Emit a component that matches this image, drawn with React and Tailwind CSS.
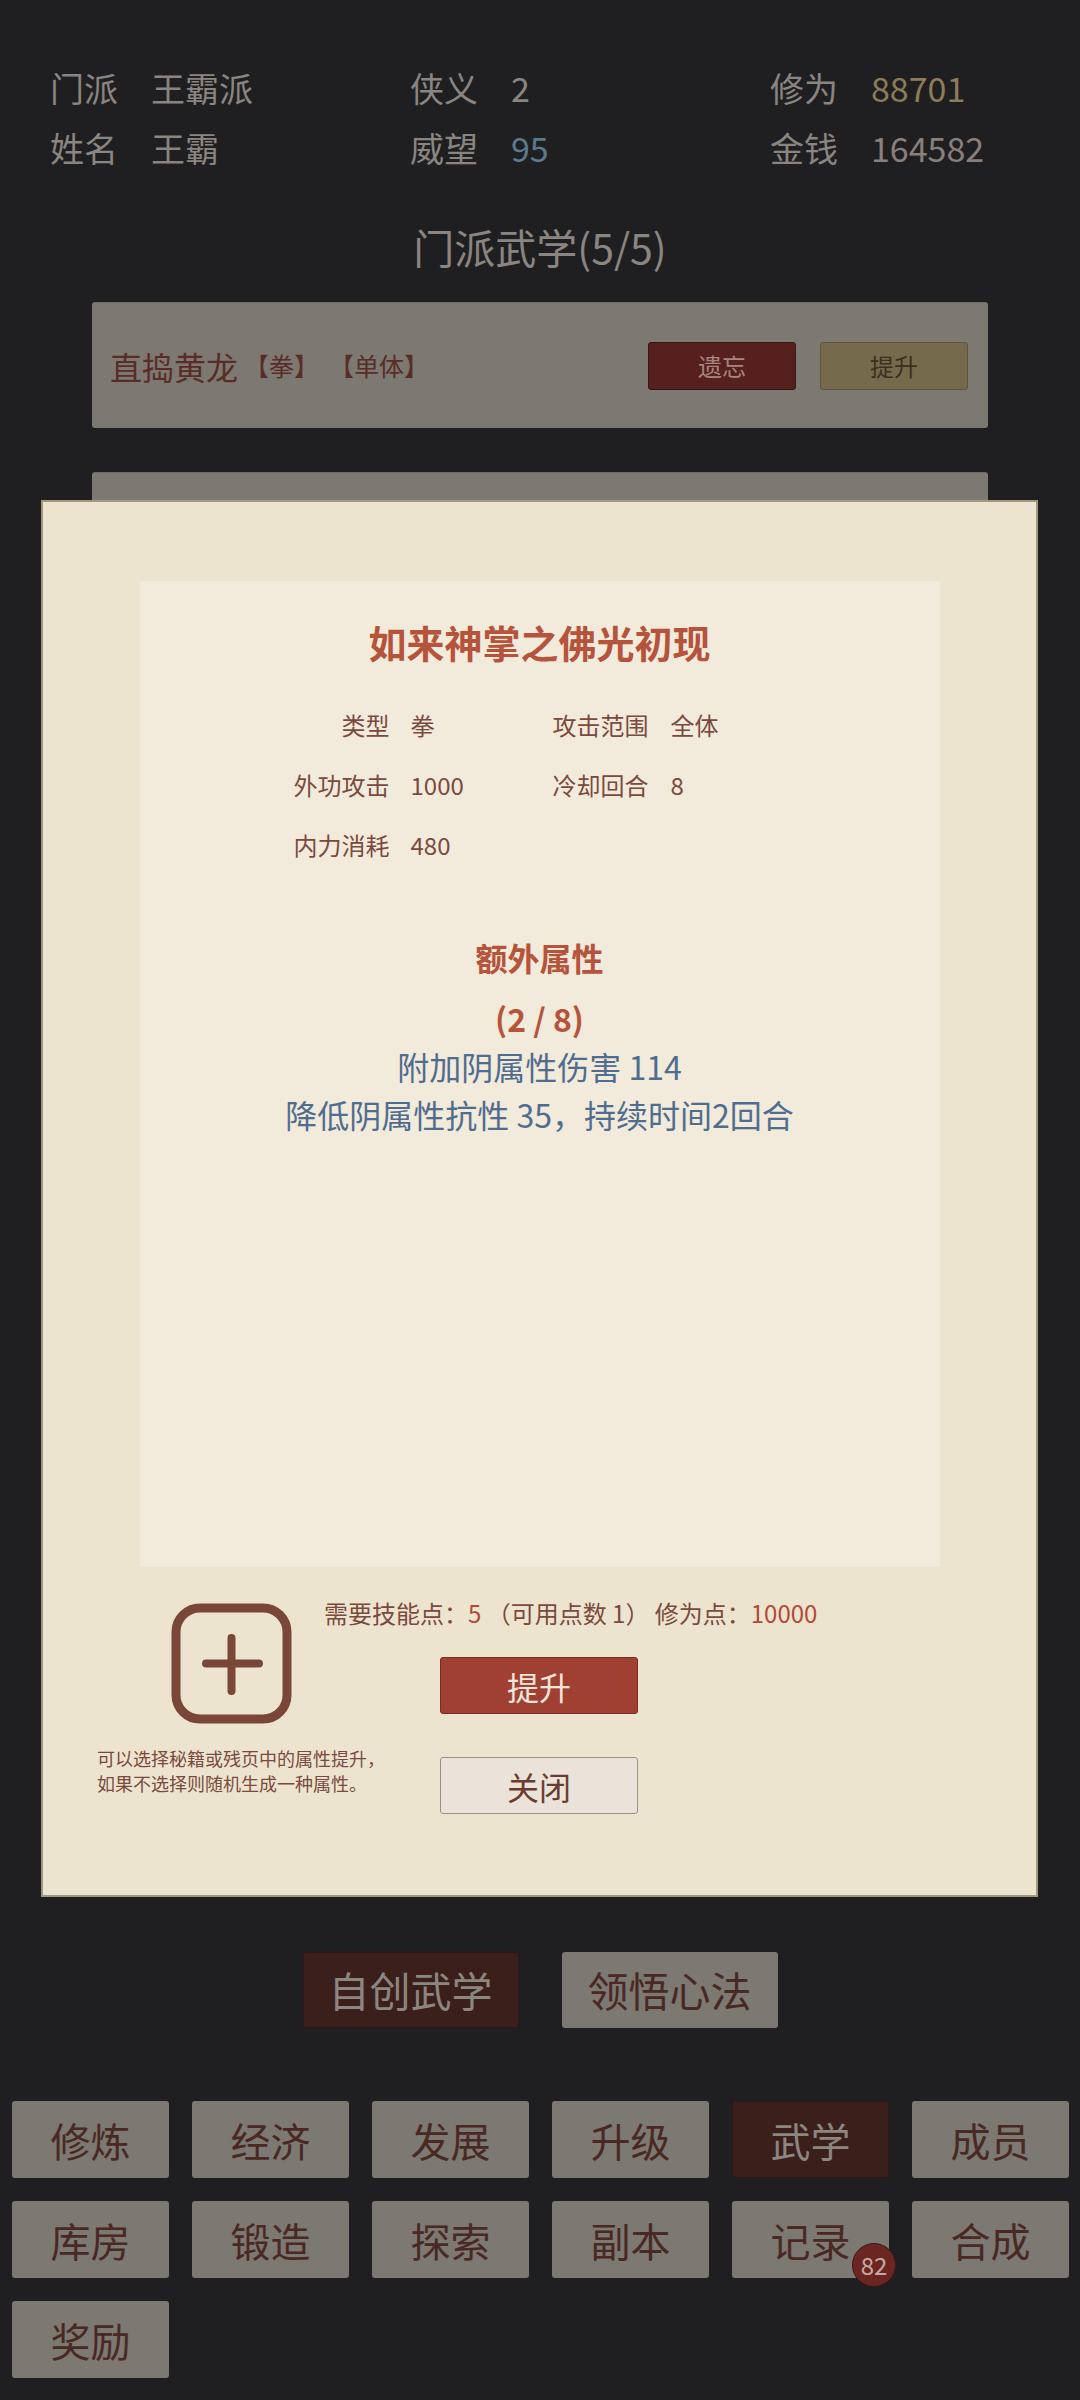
import React from 'react'

const font = { fontFamily: '"Noto Sans CJK SC", "Noto Sans", sans-serif' }

function InfoItem({ label, value, color }) {
  return (
    <div className="flex items-center h-[60px]">
      <span className="w-[68px] text-[#8a8580]">{label}</span>
      <span className={`ml-[33px] ${color}`}>{value}</span>
    </div>
  )
}

function StatRow({ a, b, c, d }) {
  return (
    <div className="flex items-center h-[60px] text-[24px] text-[#7a4a3e]">
      <span className="w-[250px] text-right">{a}</span>
      <span className="w-[142px] ml-[21px]">{b}</span>
      <span className="w-[96px] text-right">{c}</span>
      <span className="ml-[22px]">{d}</span>
    </div>
  )
}

function PlusIcon() {
  return (
    <svg width="121" height="121" viewBox="0 0 121 121" fill="none">
      <rect x="5" y="5" width="111" height="111" rx="24" stroke="#7a4638" strokeWidth="9" />
      <path d="M35 60.5H88M60.5 35V88" stroke="#7a4638" strokeWidth="8" strokeLinecap="round" />
    </svg>
  )
}

function Modal() {
  return (
    <div className="absolute left-[41px] top-[500px] w-[997px] h-[1397px] bg-[#ede4cf] border-2 border-[#a0977f] pt-[79px]">
      <div className="mx-auto w-[800px] h-[986px] bg-[#f2eadb] flex flex-col">
        <div className="mt-[36px] h-[50px] leading-[50px] text-center text-[38px] font-bold text-[#b5533b]">如来神掌之佛光初现</div>
        <div className="mt-[28px]">
          <StatRow a="类型" b="拳" c="攻击范围" d="全体" />
          <StatRow a="外功攻击" b="1000" c="冷却回合" d="8" />
          <StatRow a="内力消耗" b="480" c="" d="" />
        </div>
        <div className="mt-[57px] h-[50px] leading-[50px] text-center text-[32px] font-bold text-[#b5533b]">额外属性</div>
        <div className="mt-[12px] text-center text-[32px] leading-[48px]">
          <div className="font-semibold text-[#b5533b]">(2 / 8)</div>
          <div className="text-[#4f6d8e]">附加阴属性伤害 114</div>
          <div className="text-[#4f6d8e]">降低阴属性抗性 35，持续时间2回合</div>
        </div>
      </div>
      <div className="flex mt-[30px]">
        <div className="w-[227px] ml-[54px] flex flex-col">
          <div className="ml-[74px] mt-[6px]"><PlusIcon /></div>
          <div className="mt-[22px] text-[18px] leading-[25px] text-[#7a4a3e] whitespace-nowrap">
            <div>可以选择秘籍或残页中的属性提升，</div>
            <div>如果不选择则随机生成一种属性。</div>
          </div>
        </div>
        <div className="flex flex-col">
          <div className="text-[24px] leading-[32px] text-[#7a4a3e] whitespace-nowrap">
            需要技能点：<span className="text-[#b04a3a]">5</span> （可用点数 1） 修为点：<span className="text-[#b04a3a]">10000</span>
          </div>
          <button className="ml-[116px] mt-[28px] w-[198px] h-[57px] rounded-[3px] bg-[#a04033] border border-[#7a2c22] text-[32px] text-[#f4e6dc] flex items-center justify-center">提升</button>
          <button className="ml-[116px] mt-[43px] w-[198px] h-[57px] rounded-[3px] bg-[#ebe3da] border border-[#9a9088] text-[32px] text-[#6a3c30] flex items-center justify-center">关闭</button>
        </div>
      </div>
    </div>
  )
}

const nav = ['修炼', '经济', '发展', '升级', '武学', '成员', '库房', '锻造', '探索', '副本', '记录', '合成', '奖励']

export default function App() {
  return (
    <div className="relative w-[1080px] h-[2400px] bg-[#1f1f21] overflow-hidden" style={font}>
      <div className="pt-[57px] pl-[50px] grid grid-cols-[360px_360px_1fr] text-[34px]">
        <InfoItem label="门派" value="王霸派" color="text-[#8a8580]" />
        <InfoItem label="侠义" value="2" color="text-[#8a8580]" />
        <InfoItem label="修为" value="88701" color="text-[#8c7d58]" />
        <InfoItem label="姓名" value="王霸" color="text-[#8a8580]" />
        <InfoItem label="威望" value="95" color="text-[#5a7a8e]" />
        <InfoItem label="金钱" value="164582" color="text-[#8a7f7a]" />
      </div>
      <div className="mt-[41px] h-[56px] leading-[56px] text-center text-[41px] text-[#8a8580]">门派武学(5/5)</div>

      <div className="mt-[28px] h-[1650px] flex flex-col gap-[44px] items-center">
        <div className="w-[896px] h-[126px] shrink-0 bg-[#7c7872] rounded-[3px] border-t border-[#6f6b66] flex items-center pl-[18px] pr-[20px]">
          <span className="text-[32px] text-[#5a2c26]">直捣黄龙</span>
          <span className="ml-[6px] text-[25px] text-[#5a2c26]">【拳】</span>
          <span className="ml-[10px] text-[25px] text-[#5a2c26]">【单体】</span>
          <div className="ml-auto flex gap-[24px]">
            <button className="w-[148px] h-[48px] rounded-[3px] bg-[#55201d] border border-[#3a1512] text-[24px] text-[#a88580]">遗忘</button>
            <button className="w-[148px] h-[48px] rounded-[3px] bg-[#766a4d] border border-[#5e5440] text-[24px] text-[#3a3020]">提升</button>
          </div>
        </div>
        <div className="w-[896px] h-[126px] shrink-0 bg-[#7c7872] rounded-[3px] border-t border-[#6f6b66]" />
      </div>

      <div className="flex justify-center gap-[43px]">
        <button className="w-[216px] h-[76px] rounded-[3px] bg-[#3b1f1b] border border-[#2e1714] text-[41px] text-[#8c8680]">自创武学</button>
        <button className="w-[216px] h-[76px] rounded-[3px] bg-[#7c7872] text-[41px] text-[#4a2824]">领悟心法</button>
      </div>

      <div className="mt-[73px] pl-[12px] grid grid-cols-[repeat(6,157px)] gap-[23px]">
        {nav.map((n) => (
          <div key={n} className={`relative h-[77px] rounded-[3px] flex items-center justify-center text-[40px] ${n === '武学' ? 'bg-[#3b1f1b] border border-[#2e1714] text-[#8c8680]' : 'bg-[#7c7872] text-[#4a2824]'}`}>
            {n}
            {n === '记录' && (
              <span className="absolute left-[120px] top-[42px] w-[44px] h-[44px] rounded-full bg-[#6c2622] border border-[#3a1816] text-[24px] text-[#c4aaa4] flex items-center justify-center">82</span>
            )}
          </div>
        ))}
      </div>

      <Modal />
    </div>
  )
}
